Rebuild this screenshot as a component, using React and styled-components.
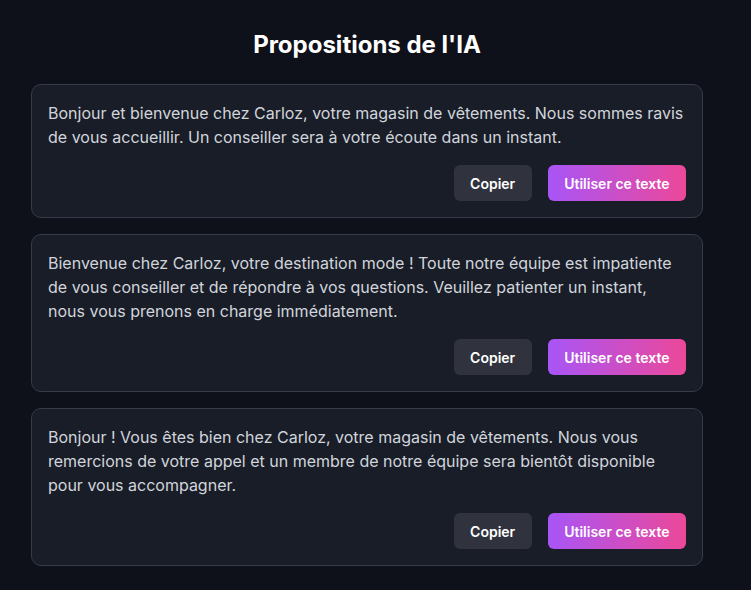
import React from "react";
import styled, { createGlobalStyle } from "styled-components";

const Global = createGlobalStyle`
  html, body { margin: 0; padding: 0; background: #0f111a; }
  body { font-family: Inter, "Noto Sans", sans-serif; color: #e5e7eb; }
  * { box-sizing: border-box; }
`;

const Page = styled.div`
  width: 736px;
  padding: 29px 33px 24px 31px;
  min-height: 590px;
  background: #0f111a;
`;

const Title = styled.h2`
  margin: 0 0 23px;
  text-align: center;
  font-size: 24px;
  line-height: 32px;
  font-weight: 700;
  color: #ffffff;
`;

const List = styled.div`
  display: flex;
  flex-direction: column;
  gap: 16px;
`;

const Card = styled.div`
  background: #191d28;
  border: 1px solid #363b49;
  border-radius: 10px;
  padding: 16px;
  display: flex;
  flex-direction: column;
  gap: 16px;
`;

const Text = styled.p`
  margin: 0;
  font-size: 16px;
  line-height: 24px;
  color: #d1d5db;
`;

const Actions = styled.div`
  display: flex;
  justify-content: flex-end;
  gap: 16px;
`;

const Button = styled.button`
  height: 36px;
  padding: 0 16.5px;
  border: none;
  border-radius: 6px;
  font-family: Inter, sans-serif;
  font-size: 14px;
  font-weight: 600;
  color: #ffffff;
  cursor: pointer;
  background: ${(p) =>
    p.$primary ? "linear-gradient(90deg, #a855f7, #ec4899)" : "#30333d"};
`;

const proposals = [
  "Bonjour et bienvenue chez Carloz, votre magasin de vêtements. Nous sommes ravis de vous accueillir. Un conseiller sera à votre écoute dans un instant.",
  "Bienvenue chez Carloz, votre destination mode ! Toute notre équipe est impatiente de vous conseiller et de répondre à vos questions. Veuillez patienter un instant, nous vous prenons en charge immédiatement.",
  "Bonjour ! Vous êtes bien chez Carloz, votre magasin de vêtements. Nous vous remercions de votre appel et un membre de notre équipe sera bientôt disponible pour vous accompagner.",
];

export default function App() {
  return (
    <>
      <Global />
      <Page>
        <Title>Propositions de l'IA</Title>
        <List>
          {proposals.map((t, i) => (
            <Card key={i}>
              <Text>{t}</Text>
              <Actions>
                <Button>Copier</Button>
                <Button $primary>Utiliser ce texte</Button>
              </Actions>
            </Card>
          ))}
        </List>
      </Page>
    </>
  );
}
